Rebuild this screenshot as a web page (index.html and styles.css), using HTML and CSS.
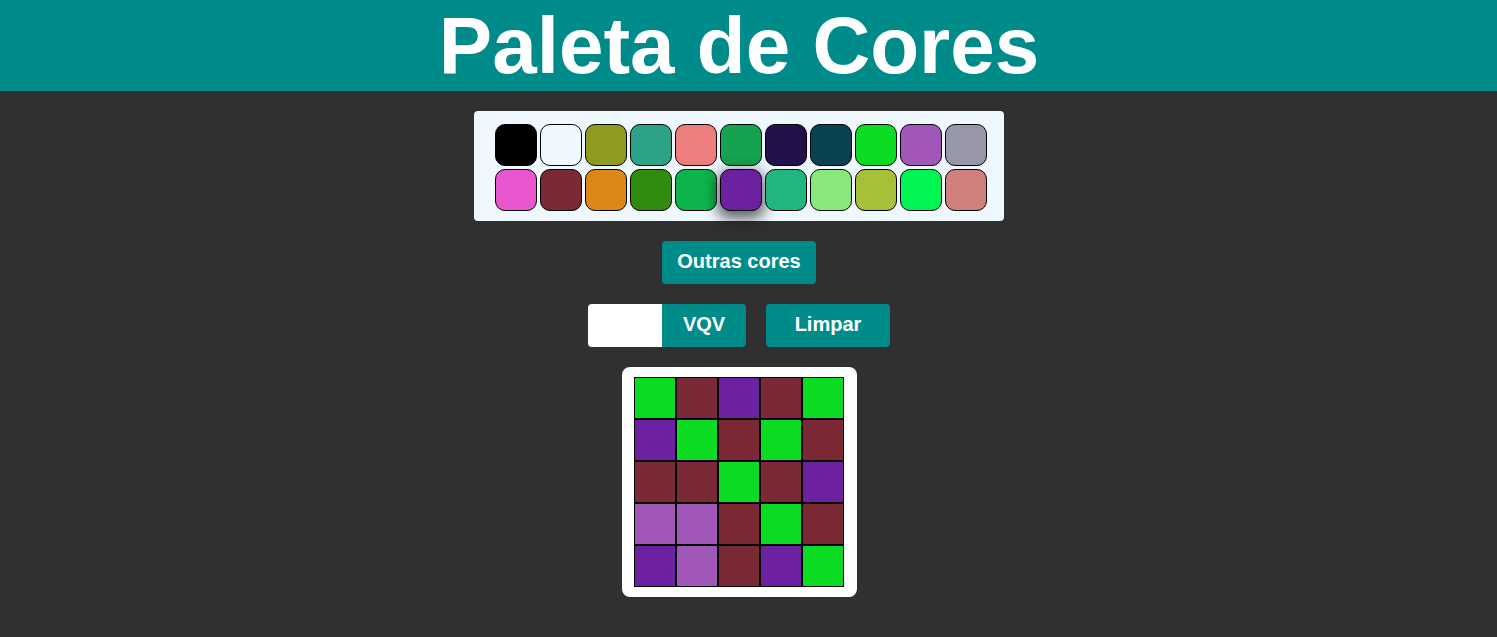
FILE: index.html
```html
<!DOCTYPE html>
<html lang="pt-BR">
<head>
<meta charset="utf-8">
<title>Paleta de Cores</title>
<link rel="stylesheet" href="styles.css">
</head>
<body>
<header class="header">
  <h1 class="title">Paleta de Cores</h1>
</header>
<main class="main">
  <section class="palette">
    <div class="swatch" style="background:#000000"></div>
    <div class="swatch" style="background:#f0f8ff"></div>
    <div class="swatch" style="background:#8f9b20"></div>
    <div class="swatch" style="background:#2ca386"></div>
    <div class="swatch" style="background:#ec7e7e"></div>
    <div class="swatch" style="background:#15a34f"></div>
    <div class="swatch" style="background:#22114a"></div>
    <div class="swatch" style="background:#0a424f"></div>
    <div class="swatch" style="background:#0bdc22"></div>
    <div class="swatch" style="background:#a057b7"></div>
    <div class="swatch" style="background:#9897aa"></div>
    <div class="swatch" style="background:#e756cf"></div>
    <div class="swatch" style="background:#7b2935"></div>
    <div class="swatch" style="background:#dc8818"></div>
    <div class="swatch" style="background:#2f8c0e"></div>
    <div class="swatch" style="background:#0db44c"></div>
    <div class="swatch selected" style="background:#6c22a0"></div>
    <div class="swatch" style="background:#20b77f"></div>
    <div class="swatch" style="background:#88e87c"></div>
    <div class="swatch" style="background:#a7c03a"></div>
    <div class="swatch" style="background:#00f552"></div>
    <div class="swatch" style="background:#cf7f7c"></div>
  </section>
  <button class="btn btn-other">Outras cores</button>
  <div class="controls">
    <div class="board-size">
      <input class="size-input" type="number">
      <button class="btn btn-vqv">VQV</button>
    </div>
    <button class="btn btn-clear">Limpar</button>
  </div>
  <section class="board-wrap">
    <div class="board">
      <div class="pixel" style="background:#0bdc22"></div>
      <div class="pixel" style="background:#7b2935"></div>
      <div class="pixel" style="background:#6c22a0"></div>
      <div class="pixel" style="background:#7b2935"></div>
      <div class="pixel" style="background:#0bdc22"></div>
      <div class="pixel" style="background:#6c22a0"></div>
      <div class="pixel" style="background:#0bdc22"></div>
      <div class="pixel" style="background:#7b2935"></div>
      <div class="pixel" style="background:#0bdc22"></div>
      <div class="pixel" style="background:#7b2935"></div>
      <div class="pixel" style="background:#7b2935"></div>
      <div class="pixel" style="background:#7b2935"></div>
      <div class="pixel" style="background:#0bdc22"></div>
      <div class="pixel" style="background:#7b2935"></div>
      <div class="pixel" style="background:#6c22a0"></div>
      <div class="pixel" style="background:#a057b7"></div>
      <div class="pixel" style="background:#a057b7"></div>
      <div class="pixel" style="background:#7b2935"></div>
      <div class="pixel" style="background:#0bdc22"></div>
      <div class="pixel" style="background:#7b2935"></div>
      <div class="pixel" style="background:#6c22a0"></div>
      <div class="pixel" style="background:#a057b7"></div>
      <div class="pixel" style="background:#7b2935"></div>
      <div class="pixel" style="background:#6c22a0"></div>
      <div class="pixel" style="background:#0bdc22"></div>
    </div>
  </section>
</main>
</body>
</html>
```

FILE: styles.css
```css
html, body {
  margin: 0;
  padding: 0;
}

body {
  background: #303030;
  font-family: "Liberation Sans", Arial, sans-serif;
  min-height: 637px;
}

.header {
  background: #008b8b;
  height: 91px;
  display: flex;
  justify-content: center;
  padding-right: 19px;
}

.title {
  margin: 0;
  color: #ffffff;
  font-size: 80px;
  font-weight: bold;
  line-height: 91px;
}

.main {
  display: flex;
  flex-direction: column;
  align-items: center;
  padding-top: 20px;
  padding-right: 19px;
  gap: 20px;
}

.palette {
  width: 492px;
  padding: 13px 17px 10px 21px;
  background: #f0f8ff;
  border-radius: 4px;
  display: grid;
  grid-template-columns: repeat(11, 42px);
  gap: 3px;
}

.swatch {
  width: 42px;
  height: 42px;
  box-sizing: border-box;
  border: 1px solid #000;
  border-radius: 10px;
}

.swatch.selected {
  box-shadow: 0 5px 14px 3px rgba(0, 0, 0, 0.6);
}

.btn {
  border: none;
  background: #008b8b;
  color: #fff;
  font-family: "Liberation Sans", Arial, sans-serif;
  font-weight: bold;
  font-size: 20px;
  height: 43px;
  border-radius: 4px;
  padding: 0;
  cursor: pointer;
}

.btn-other {
  width: 154px;
  padding-bottom: 2px;
}

.controls {
  display: flex;
  gap: 20px;
}

.board-size {
  display: flex;
}

.size-input {
  width: 74px;
  height: 43px;
  box-sizing: border-box;
  border: none;
  border-radius: 4px 0 0 4px;
  background: #fff;
  margin: 0;
  padding: 0;
}

.btn-vqv {
  width: 84px;
  border-radius: 0 4px 4px 0;
  padding-bottom: 2px;
}

.btn-clear {
  width: 124px;
  padding-bottom: 2px;
}

.board-wrap {
  background: #fff;
  border-radius: 8px;
  padding: 10px 13px 10px 12px;
}

.board {
  display: grid;
  grid-template-columns: repeat(5, 42px);
  grid-auto-rows: 42px;
}

.pixel {
  box-sizing: border-box;
  border: 1px solid #000;
}
```
